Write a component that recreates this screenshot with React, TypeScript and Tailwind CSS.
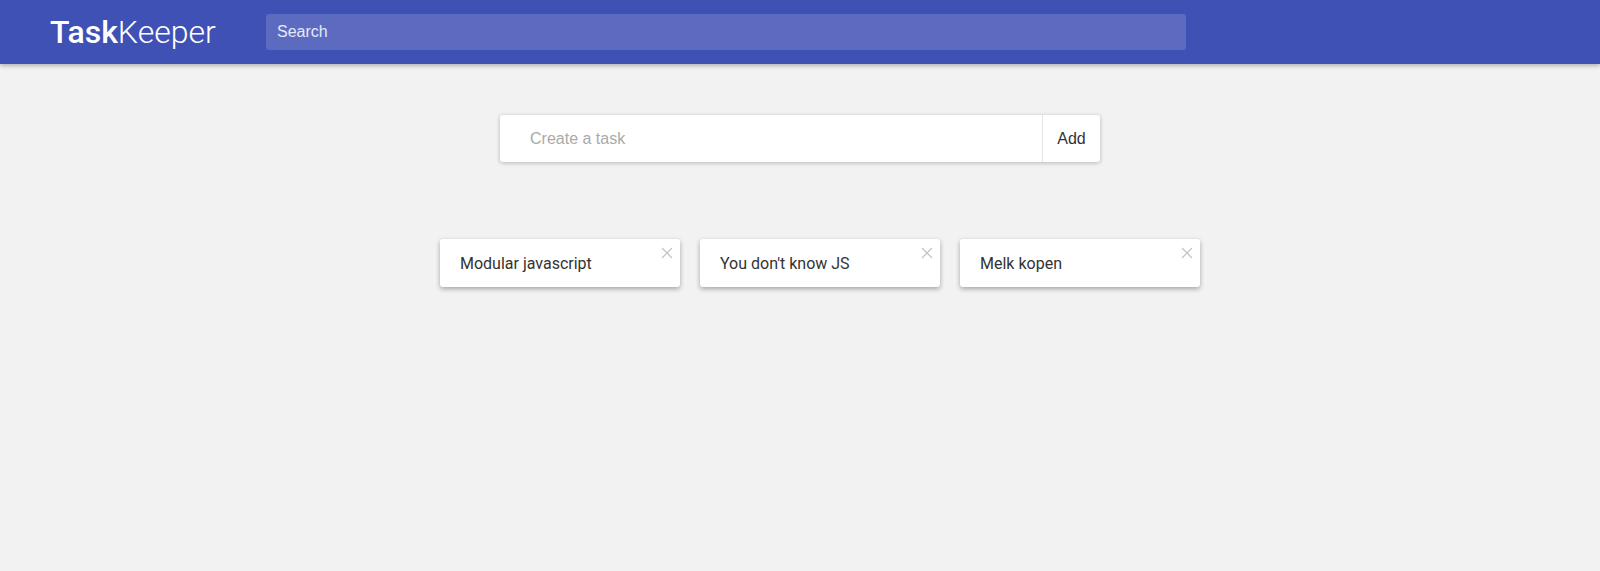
import { useState } from "react";

const tasks = ["Modular javascript", "You don't know JS", "Melk kopen"];

function CloseIcon() {
  return (
    <svg width="12" height="12" viewBox="0 0 12 12" fill="none">
      <path d="M1 1L11 11M11 1L1 11" stroke="#c4c4c4" strokeWidth="1.3" />
    </svg>
  );
}

function TaskCard({ title }: { title: string }) {
  return (
    <div className="relative flex h-[48px] w-[240px] items-center rounded-[3px] bg-white pl-5 pt-[2px] shadow-[0_2px_5px_rgba(0,0,0,0.32)]">
      <span className="font-['Roboto',sans-serif] text-[16px] text-[#333]">{title}</span>
      <button className="absolute right-[6px] top-[7px] p-[1px]">
        <CloseIcon />
      </button>
    </div>
  );
}

export default function App() {
  const [value, setValue] = useState("");

  return (
    <div className="min-h-screen bg-[#f2f2f2] font-['Liberation_Sans',Arial,sans-serif]">
      {/* Header */}
      <header className="flex h-16 items-center bg-[#3f51b5] shadow-[0_2px_4px_rgba(0,0,0,0.25)]">
        <h1 className="ml-[50px] w-[216px] font-['Roboto',sans-serif] text-[32px] leading-none text-white">
          <span className="font-medium">Task</span>
          <span className="font-light">Keeper</span>
        </h1>
        <div className="flex h-9 w-[920px] items-center rounded-[3px] bg-[#5c6bc0] px-[11px] text-[16px] text-white/85">
          Search
        </div>
      </header>

      {/* Create task */}
      <div className="mt-[51px] flex justify-center">
        <div className="flex h-[47px] w-[600px] rounded-[3px] bg-white shadow-[0_1px_4px_rgba(0,0,0,0.25)]">
          <input
            autoFocus
            value={value}
            onChange={(e) => setValue(e.target.value)}
            placeholder="Create a task"
            className="flex-1 bg-transparent pl-[30px] text-[16px] text-[#333] caret-black outline-none placeholder:text-[#aaa]"
          />
          <button className="w-[58px] border-l border-[#e4e4e4] text-[16px] text-[#333]">Add</button>
        </div>
      </div>

      {/* Task list */}
      <div className="mt-[77px] flex justify-center gap-5 pl-10">
        {tasks.map((t) => (
          <TaskCard key={t} title={t} />
        ))}
      </div>
    </div>
  );
}
